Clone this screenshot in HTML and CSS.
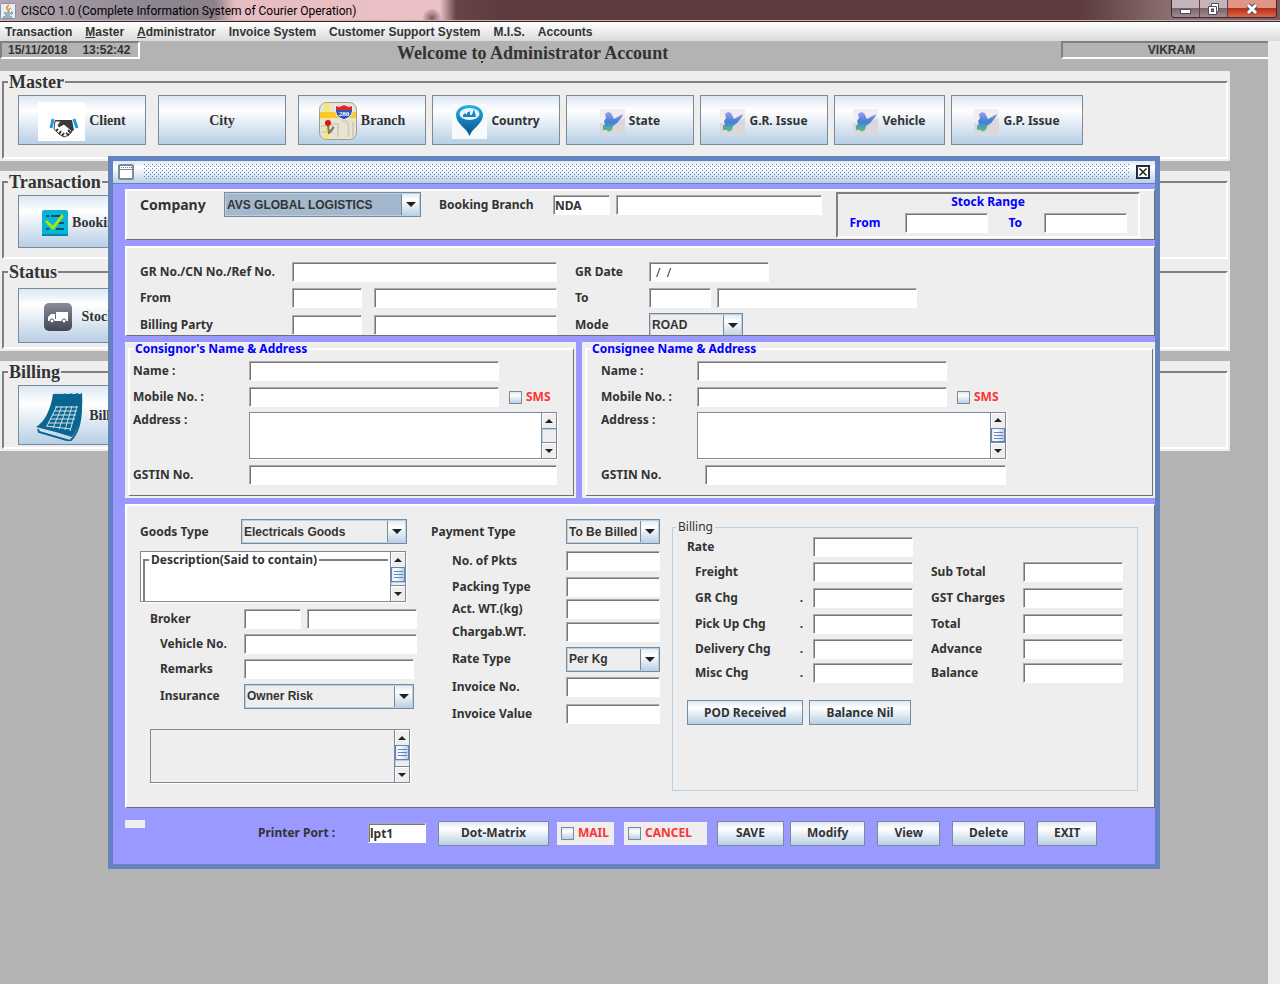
FILE: index.html
```html
<!DOCTYPE html>
<html lang="en">

<head>
    <meta charset="UTF-8">
    <meta name="viewport" content="width=device-width, initial-scale=1.0">
    <title>CISCO 1.0 (Complete Information System of Courier Operation)</title>
    <link rel="stylesheet" href="styles.css">
</head>

<body>

    <svg class="defs" aria-hidden="true">
        <defs>
            <linearGradient id="mapFill" x1="0" y1="0" x2="0" y2="1">
                <stop offset="0" stop-color="#a49bec" />
                <stop offset="0.5" stop-color="#3f7fd8" />
                <stop offset="1" stop-color="#5fc878" />
            </linearGradient>
            <linearGradient id="pinFill" x1="0" y1="0" x2="0" y2="1">
                <stop offset="0" stop-color="#27b1e6" />
                <stop offset="1" stop-color="#064f8c" />
            </linearGradient>
            <linearGradient id="truckFill" x1="0" y1="0" x2="0" y2="1">
                <stop offset="0" stop-color="#8a8b98" />
                <stop offset="1" stop-color="#454654" />
            </linearGradient>
        </defs>
        <symbol id="map" viewBox="0 0 25 25">
            <rect width="25" height="25" fill="#f1edf0" />
            <path d="M0 14 Q14 14 25 9 V25 H0Z" fill="#dcd8da" />
            <path d="M5 5 L8 3 L11 4 L14 10 L23 5 L22 8 L17 14 L13 17 L12 21 L8 23 L7 21 L3 21 L3 17 L5 15 L4 12 L6 9Z" fill="url(#mapFill)" />
        </symbol>
        <symbol id="up" viewBox="0 0 8 4">
            <path d="M4 0 L8 4 H0Z" fill="#222" />
        </symbol>
        <symbol id="down" viewBox="0 0 8 4">
            <path d="M0 0 H8 L4 4Z" fill="#222" />
        </symbol>
    </svg>

    <header class="titlebar">
        <svg class="java" viewBox="0 0 16 16" aria-hidden="true">
            <rect x="0.5" y="0.5" width="15" height="15" rx="1" fill="#e9eef3" stroke="#8196aa" />
            <path d="M9 2 Q5 5 8 7 Q9 8 8 9 M11 5 Q8 6 9 8" fill="none" stroke="#e8780f" stroke-width="1.3" />
            <path d="M4 10 H11 M5 12 H10 M11 9 Q14 9 11 12 M3 14 H12" fill="none" stroke="#47769c" />
        </svg>
        <span class="app-title">CISCO 1.0 (Complete Information System of Courier Operation)</span>
        <div class="win-controls">
            <button aria-label="Minimize"><svg width="13" height="12"><rect x="1.5" y="6.5" width="10" height="4" fill="#fff" stroke="#4b4f62" /></svg></button>
            <button aria-label="Restore"><svg width="13" height="14"><path d="M4.500 1.500 H11.500 V9.500 H9.500 V12.500 H1.500 V4.500 H4.500Z" fill="#fff" stroke="#4b4f62" /><path d="M4.500 4.500 H9.500 V9" fill="none" stroke="#4b4f62" /><rect x="4.500" y="7" width="2" height="2.500" fill="#8a7a80" stroke="#4b4f62" /></svg></button>
            <button class="win-close" aria-label="Close"><svg width="14" height="12"><path d="M3 2 L11 10 M11 2 L3 10" stroke="#4b4f62" stroke-width="5" /><path d="M3 2 L11 10 M11 2 L3 10" stroke="#fff" stroke-width="3" /></svg></button>
        </div>
    </header>

    <nav class="menubar">
        <a href="#">Transaction</a>
        <a href="#"><u>M</u>aster</a>
        <a href="#"><u>A</u>dministrator</a>
        <a href="#">Invoice System</a>
        <a href="#">Customer Support System</a>
        <a href="#">M.I.S.</a>
        <a href="#">Accounts</a>
    </nav>

    <main class="desktop">
        <div class="status">
            <div class="clock"><span>15/11/2018</span><span>13:52:42</span></div>
            <h1>Welcome to Administrator Account</h1>
            <span class="dot"></span>
            <div class="user">VIKRAM</div>
        </div>

        <section class="group">
            <fieldset class="tools">
                <legend>Master</legend>
                <button class="tool serif">
                    <svg width="47" height="39" viewBox="0 0 47 39">
                        <rect width="47" height="39" fill="#fff" />
                        <path d="M15 17 L13 26 M36 17 L39 26" stroke="#1e9ade" stroke-width="3" />
                        <path d="M17 18 H34 L36 28 L33 30 L25 23 L20 25 L22 20 L17 19Z" fill="#3c3c3c" />
                        <path d="M17 19 L16 27 L21 32 L26 35 L31 33 L34 29 L26 22 L21 25 L20 23 L23 19Z" fill="#fff" stroke="#3c3c3c" />
                        <path d="M18 29 L20 27 M21 32 L23 29 M24 34 L26 31 M28 31 L31 33 M30 28 L33 31" stroke="#3c3c3c" stroke-width="2" />
                    </svg>
                    Client
                </button>
                <button class="tool serif spaced">City</button>
                <button class="tool serif spaced">
                    <svg width="38" height="38" viewBox="0 0 38 38">
                        <rect x="0.500" y="0.500" width="37" height="37" rx="7" fill="#e9e4d2" stroke="#a39d8a" />
                        <path d="M8 1 V37" stroke="#f5e96c" stroke-width="5" />
                        <path d="M1 13 H37" stroke="#fbc92c" stroke-width="6" />
                        <path d="M13 31 V22 H19 V35 M23 19 Q32 17 29 35 M34 20 V35 M2 24 H7 M2 30 H7" fill="none" stroke="#d3cebd" stroke-width="2" />
                        <path d="M17 4 L20 5 L25 3 L30 5 L33 4 Q36 14 25 18 Q14 14 17 4Z" fill="#2a58b5" stroke="#fff" />
                        <path d="M17 4 L20 5 L25 3 L30 5 L33 4 V8 H17Z" fill="#dd2b28" />
                        <text x="25" y="14" fill="#fff" font-size="7" text-anchor="middle">280</text>
                        <path d="M9 23 L10 32 M10 31 L15 25" stroke="#777" stroke-width="2" />
                        <circle cx="9" cy="21" r="3" fill="#d8151a" />
                    </svg>
                    Branch
                </button>
                <button class="tool">
                    <svg width="35" height="35" viewBox="0 0 35 35">
                        <rect width="35" height="35" fill="#f7fafa" />
                        <path d="M17.500 32 C15 24 4 20 4 11 C4 5 10 1 17.500 1 C25 1 31 5 31 11 C31 20 20 24 17.500 32Z" fill="url(#pinFill)" />
                        <ellipse cx="17.500" cy="10" rx="10" ry="6" fill="#e8f5fb" />
                        <path d="M11 13 V11 L13 9 L15 11 V9 L18 7 V11 L20 11 L22 5 L24 13Z" fill="#1583bd" />
                    </svg>
                    Country
                </button>
                <button class="tool"><svg width="25" height="25"><use href="#map" /></svg>State</button>
                <button class="tool"><svg width="25" height="25"><use href="#map" /></svg>G.R. Issue</button>
                <button class="tool narrow"><svg width="25" height="25"><use href="#map" /></svg>Vehicle</button>
                <button class="tool wide"><svg width="25" height="25"><use href="#map" /></svg>G.P. Issue</button>
            </fieldset>
        </section>

        <section class="group">
            <fieldset class="tools transaction">
                <legend>Transaction</legend>
                <button class="tool serif">
                    <svg width="26" height="26" viewBox="0 0 26 26">
                        <rect width="26" height="26" rx="2" fill="#08b3d8" />
                        <rect y="24" width="26" height="2" fill="#0789aa" />
                        <path d="M4 6 H7 M9 6 H22 M4 13 H6 M14 13 H22 M4 19 H7 M14 19 H22" stroke="#0c5370" stroke-width="2" />
                        <path d="M4 11 L11 18 L21 5" fill="none" stroke="#a3e80d" stroke-width="3" />
                    </svg>
                    Booking
                </button>
            </fieldset>
            <fieldset class="tools stock">
                <legend>Status</legend>
                <button class="tool serif">
                    <svg width="34" height="28" viewBox="0 0 34 28">
                        <rect width="28" height="28" rx="5" fill="url(#truckFill)" />
                        <path d="M12 9 H24 V18 H4 V14 L7 11 H11 V16 H12Z" fill="#fff" />
                        <circle cx="8" cy="18" r="2" fill="#fff" stroke="#555663" />
                        <circle cx="20" cy="18" r="2" fill="#fff" stroke="#555663" />
                    </svg>
                    Stocks
                </button>
            </fieldset>
        </section>

        <section class="group">
            <fieldset class="tools bills">
                <legend>Billing</legend>
                <button class="tool serif">
                    <svg width="50" height="50" viewBox="0 0 50 50">
                        <path d="M1 36 Q14 28 18 3 L47 2 Q49 30 37 46 Q18 40 1 36Z" fill="#0a6691" />
                        <path d="M3 38 L4 41 L35 50 Q46 40 46 16" fill="none" stroke="#0a6691" stroke-width="2" />
                        <path d="M19 2 H46" stroke="#d5e5ef" stroke-width="2" stroke-dasharray="4 2" />
                        <path d="M20 16 H43 M19 20 H42 M17 24 H41 M15 28 H40 M13 32 H38 M11 35 L36 38 M22 15 L12 35 M27 15 L18 37 M32 15 L24 38 M37 15 L30 39 M42 15 L35 40" fill="none" stroke="#cfe0ec" />
                    </svg>
                    Billing
                </button>
            </fieldset>
        </section>

        <!-- booking entry window -->
        <form class="frame">
            <div class="frame-bar">
                <svg width="16" height="16" aria-hidden="true"><rect x="1" y="1" width="14" height="14" rx="1" fill="#fff" stroke="#7a8a99" stroke-width="2" /><path d="M3 3.500 H14" stroke="#6382bf" stroke-dasharray="1 1" /><path d="M2 5.500 H14" stroke="#7a8a99" /></svg>
                <span class="grip"></span>
                <button type="button" class="frame-close" aria-label="Close window"><svg width="14" height="14"><rect x="1" y="1" width="12" height="12" fill="#fff" stroke="#222c40" stroke-width="2" /><path d="M3.500 3.500 L10.500 10.500 M10.500 3.500 L3.500 10.500" stroke="#222" stroke-width="1.500" /></svg></button>
            </div>

            <div class="frame-body">
                <div class="panel company-panel">
                    <label class="big" for="company">Company</label>
                    <select id="company" class="focused">
                        <option>AVS GLOBAL LOGISTICS</option>
                    </select>
                    <label for="branch">Booking Branch</label>
                    <input type="text" id="branch" value="NDA">
                    <input type="text" id="branchName" aria-label="Branch name">
                    <div class="stock-range">
                        <h2>Stock Range</h2>
                        <label for="rangeFrom">From</label>
                        <input type="text" id="rangeFrom">
                        <label for="rangeTo">To</label>
                        <input type="text" id="rangeTo">
                    </div>
                </div>

                <div class="panel gr-panel">
                    <label for="grNo">GR No./CN No./Ref No.</label>
                    <input type="text" id="grNo" class="span-two">
                    <label for="grDate">GR Date</label>
                    <input type="text" id="grDate" class="date" value=" /  /">
                    <label for="fromCode">From</label>
                    <input type="text" id="fromCode">
                    <input type="text" aria-label="From name">
                    <label for="toCode">To</label>
                    <input type="text" id="toCode">
                    <input type="text" class="to-name" aria-label="To name">
                    <label for="party">Billing Party</label>
                    <input type="text" id="party">
                    <input type="text" aria-label="Billing party name">
                    <label for="mode">Mode</label>
                    <select id="mode" class="mode">
                        <option>ROAD</option>
                    </select>
                </div>

                <div class="parties">
                    <div class="party">
                        <fieldset class="raised">
                            <legend>Consignor's Name &amp; Address</legend>
                            <div class="party-fields">
                                <label for="crName">Name :</label>
                                <input type="text" id="crName">
                                <label for="crMobile">Mobile No. :</label>
                                <input type="text" id="crMobile">
                                <label class="check"><input type="checkbox">SMS</label>
                                <label for="crAddress" class="top">Address :</label>
                                <div class="textbox">
                                    <textarea id="crAddress"></textarea>
                                    <div class="scroll">
                                        <button type="button" aria-label="Up"><svg width="8" height="4"><use href="#up" /></svg></button>
                                        <i class="track"></i>
                                        <button type="button" aria-label="Down"><svg width="8" height="4"><use href="#down" /></svg></button>
                                    </div>
                                </div>
                                <label for="crGst">GSTIN No.</label>
                                <input type="text" id="crGst" class="gst">
                            </div>
                        </fieldset>
                    </div>
                    <div class="party">
                        <fieldset class="raised">
                            <legend>Consignee Name &amp; Address</legend>
                            <div class="party-fields consignee">
                                <label for="ceName">Name :</label>
                                <input type="text" id="ceName">
                                <label for="ceMobile">Mobile No. :</label>
                                <input type="text" id="ceMobile">
                                <label class="check"><input type="checkbox">SMS</label>
                                <label for="ceAddress" class="top">Address :</label>
                                <div class="textbox">
                                    <textarea id="ceAddress"></textarea>
                                    <div class="scroll">
                                        <button type="button" aria-label="Up"><svg width="8" height="4"><use href="#up" /></svg></button>
                                        <i class="thumb"></i>
                                        <i class="track"></i>
                                        <button type="button" aria-label="Down"><svg width="8" height="4"><use href="#down" /></svg></button>
                                    </div>
                                </div>
                                <label for="ceGst">GSTIN No.</label>
                                <input type="text" id="ceGst" class="gst">
                            </div>
                        </fieldset>
                    </div>
                </div>

                <div class="panel goods-panel">
                    <div class="goods">
                        <div class="goods-type">
                            <label for="goods">Goods Type</label>
                            <select id="goods">
                                <option>Electricals Goods</option>
                            </select>
                        </div>
                        <div class="textbox description">
                            <fieldset>
                                <legend><label for="desc">Description(Said to contain)</label></legend>
                                <textarea id="desc"></textarea>
                            </fieldset>
                            <div class="scroll">
                                <button type="button" aria-label="Up"><svg width="8" height="4"><use href="#up" /></svg></button>
                                <i class="thumb"></i>
                                <i class="track"></i>
                                <button type="button" aria-label="Down"><svg width="8" height="4"><use href="#down" /></svg></button>
                            </div>
                        </div>
                        <div class="goods-fields">
                            <label for="broker">Broker</label>
                            <div class="broker">
                                <input type="text" id="broker">
                                <input type="text" aria-label="Broker name">
                            </div>
                            <label for="vehicle" class="indent">Vehicle No.</label>
                            <input type="text" id="vehicle">
                            <label for="remarks" class="indent">Remarks</label>
                            <input type="text" id="remarks" class="short">
                            <label for="insurance" class="indent">Insurance</label>
                            <select id="insurance" class="short">
                                <option>Owner Risk</option>
                            </select>
                        </div>
                        <div class="textbox notes">
                            <textarea aria-label="Notes"></textarea>
                            <div class="scroll">
                                <button type="button" aria-label="Up"><svg width="8" height="4"><use href="#up" /></svg></button>
                                <i class="thumb"></i>
                                <i class="track"></i>
                                <button type="button" aria-label="Down"><svg width="8" height="4"><use href="#down" /></svg></button>
                            </div>
                        </div>
                    </div>

                    <div class="payment">
                        <label for="payType">Payment Type</label>
                        <select id="payType">
                            <option>To Be Billed</option>
                        </select>
                        <label for="pkts" class="indent">No. of Pkts</label>
                        <input type="text" id="pkts">
                        <label for="packing" class="indent">Packing Type</label>
                        <input type="text" id="packing">
                        <label for="actWt" class="indent">Act. WT.(kg)</label>
                        <input type="text" id="actWt">
                        <label for="chgWt" class="indent">Chargab.WT.</label>
                        <input type="text" id="chgWt">
                        <label for="rateType" class="indent">Rate Type</label>
                        <select id="rateType">
                            <option>Per Kg</option>
                        </select>
                        <label for="invNo" class="indent">Invoice No.</label>
                        <input type="text" id="invNo">
                        <label for="invValue" class="indent">Invoice Value</label>
                        <input type="text" id="invValue">
                    </div>

                    <fieldset class="billing">
                        <legend>Billing</legend>
                        <div class="charges">
                            <label for="rate" class="outdent">Rate</label>
                            <input type="text" id="rate">
                            <label for="freight">Freight</label>
                            <input type="text" id="freight">
                            <label for="subTotal">Sub Total</label>
                            <input type="text" id="subTotal">
                            <label for="grChg">GR Chg <span>.</span></label>
                            <input type="text" id="grChg">
                            <label for="gst">GST Charges</label>
                            <input type="text" id="gst">
                            <label for="pickUp">Pick Up Chg <span>.</span></label>
                            <input type="text" id="pickUp">
                            <label for="total">Total</label>
                            <input type="text" id="total">
                            <label for="delivery">Delivery Chg <span>.</span></label>
                            <input type="text" id="delivery">
                            <label for="advance">Advance</label>
                            <input type="text" id="advance">
                            <label for="misc">Misc Chg <span>.</span></label>
                            <input type="text" id="misc">
                            <label for="balance">Balance</label>
                            <input type="text" id="balance">
                        </div>
                        <div class="billing-actions">
                            <button type="button" class="btn">POD Received</button>
                            <button type="button" class="btn">Balance Nil</button>
                        </div>
                    </fieldset>
                </div>

                <div class="actions">
                    <span class="blank"></span>
                    <label for="port">Printer Port :</label>
                    <input type="text" id="port" value="lpt1">
                    <button type="button" class="btn printer">Dot-Matrix</button>
                    <label class="check boxed"><input type="checkbox">MAIL</label>
                    <label class="check boxed cancel"><input type="checkbox">CANCEL</label>
                    <button type="button" class="btn save">SAVE</button>
                    <button type="button" class="btn">Modify</button>
                    <button type="button" class="btn">View</button>
                    <button type="button" class="btn">Delete</button>
                    <button type="button" class="btn">EXIT</button>
                </div>
            </div>
        </form>
    </main>

</body>

</html>
```
FILE: styles.css
```css
* {
    box-sizing: border-box;
}

body {
    margin: 0;
    min-height: 100vh;
    display: flex;
    flex-direction: column;
    font-family: "Noto Sans", Tahoma, sans-serif;
    font-size: 12px;
    font-weight: bold;
    line-height: 16px;
    color: #333;
    background-color: #b3b3b3;
}

.defs {
    position: absolute;
    width: 0;
    height: 0;
}

fieldset {
    margin: 0;
    padding: 0;
    min-width: 0;
}

legend {
    padding: 0;
}

/* main window */
.titlebar {
    height: 22px;
    display: flex;
    align-items: center;
    border-bottom: 1px solid #3b2529;
    box-shadow: inset 0 -1px #c9b0b2;
    background:
        radial-gradient(circle at 432px 18px, #7d5a60 0, #7d5a6000 10px),
        linear-gradient(to right, #b5a7b1 0, #8b8490 160px, #8d8189 215px, #e6bcc2 235px, #ecc2c6 440px, #654546 456px, #5c3c3c 500px, #5c3c3c 1080px, #8f7477 1180px, #7a5a5c 100%);
}

.java {
    width: 16px;
    height: 16px;
    margin-right: 5px;
}

.app-title {
    font-family: Roboto, "Segoe UI", sans-serif;
    font-size: 12px;
    font-weight: normal;
    color: #000;
}

.win-controls {
    display: flex;
    align-self: flex-start;
    margin-left: auto;
    margin-right: 3px;
    border: 1px solid #3a2a2d;
    border-top: none;
    border-radius: 0 0 4px 4px;
    overflow: hidden;
}

.win-controls button {
    width: 28px;
    height: 17px;
    padding: 0;
    display: flex;
    align-items: center;
    justify-content: center;
    border: none;
    border-right: 1px solid #57444a;
    background: linear-gradient(#c5b4b7 0 45%, #7b6469 50%, #a08d91);
}

.win-controls .win-close {
    width: 48px;
    border-right: none;
    background: linear-gradient(#dd9585 0 45%, #bb2f15 50%, #d8684b);
}

.menubar {
    height: 19px;
    display: flex;
    align-items: center;
    gap: 13px;
    padding-left: 5px;
    font-family: "Liberation Sans", Arial, sans-serif;
    background: linear-gradient(#fff, #dadada);
}

.menubar a {
    color: #333;
    text-decoration: none;
}

.desktop {
    flex: 1;
    position: relative;
    border-right: 12px solid #eee;
}

.status {
    display: grid;
    grid-template-columns: 140px 1fr 207px;
    align-items: start;
    height: 30px;
    font-family: "Liberation Sans", Arial, sans-serif;
}

.clock,
.user {
    height: 18px;
    display: flex;
    align-items: center;
    border: 2px solid;
    border-color: #808080 #fff #fff #808080;
}

.clock {
    gap: 15px;
    padding-left: 6px;
}

.user {
    justify-content: center;
    padding-left: 12px;
    border-right: none;
}

.status h1 {
    margin: 0;
    padding-left: 257px;
    font-family: "Liberation Serif", "Times New Roman", serif;
    font-size: 18px;
    line-height: 24px;
}

.status .dot {
    position: absolute;
    top: 20px;
    left: 481px;
    width: 2px;
    height: 2px;
    background-color: #333;
}

.group {
    width: 97%;
    margin-bottom: 10px;
    padding: 1px 2px 2px;
    background-color: #eee;
}

.tools {
    display: flex;
    gap: 6px;
    padding: 3px 14px 12px;
    border: 2px solid;
    border-color: #808080 #fff #fff #808080;
}

.tools legend {
    margin-left: -10px;
    padding: 0 1px;
    font-family: "Liberation Serif", "Times New Roman", serif;
    font-size: 18px;
    line-height: 20px;
}

.transaction {
    padding-bottom: 9px;
    margin-bottom: 3px;
}

.stock {
    padding: 6px 14px 4px;
}

.bills {
    padding-bottom: 2px;
}

.tool,
.btn {
    font: inherit;
    color: #333;
    border: 1px solid #7a8a99;
    background: linear-gradient(#dde8f3, #fff 30%, #b8cfe5);
}

.tool {
    width: 128px;
    height: 50px;
    display: flex;
    align-items: center;
    justify-content: center;
    gap: 4px;
    padding: 2px 0 0;
}

.tool.serif {
    font-family: "Liberation Serif", "Times New Roman", serif;
    font-size: 14px;
}

.tool.spaced {
    margin-left: 6px;
}

.tool.narrow {
    width: 111px;
}

.tool.wide {
    width: 132px;
}

.transaction .tool {
    height: 53px;
}

.stock .tool {
    height: 55px;
}

.bills .tool {
    height: 60px;
}

/* internal frame */
.frame {
    position: absolute;
    top: 115px;
    left: 108px;
    right: 108px;
    border: 5px solid #6382bf;
    background-color: #99f;
}

.frame-bar {
    height: 23px;
    display: flex;
    align-items: center;
    gap: 10px;
    padding: 0 5px;
    border-bottom: 1px solid #6382bf;
    background: linear-gradient(#dde8f3, #fff 30%, #b8cfe5);
}

.grip {
    flex: 1;
    height: 16px;
    background: url("data:image/svg+xml,%3Csvg xmlns='http://www.w3.org/2000/svg' width='4' height='4'%3E%3Cpath d='M0 0h1v1H0zM2 2h1v1H2z' fill='%236382bf'/%3E%3C/svg%3E");
}

.frame-bar .frame-close {
    display: flex;
    margin-left: -4px;
    padding: 0;
    border: none;
    background: none;
}

.frame-body {
    display: flex;
    flex-direction: column;
    gap: 6px;
    padding: 5px 0 0 12px;
}

.panel {
    border: 2px solid;
    border-width: 2px 1px 1px 2px;
    border-color: #fff #707070 #707070 #fff;
    background-color: #eee;
}

input[type="text"] {
    width: 100%;
    height: 20px;
    min-width: 0;
    margin: 0;
    padding: 0 1px;
    font: inherit;
    color: #333;
    border: 1px solid;
    border-color: #aaa #fff #fff #aaa;
    border-radius: 0;
    background-color: #fff;
    box-shadow: inset 1px 1px #777;
    outline: none;
}

select {
    appearance: none;
    width: 100%;
    height: 25px;
    padding: 0 0 0 2px;
    font-family: "Liberation Sans", Arial, sans-serif;
    font-size: 12px;
    font-weight: bold;
    color: #333;
    border: 1px solid #7a8a99;
    border-radius: 0;
    box-shadow: inset 0 0 0 1px #b8cfe5;
    background:
        url("data:image/svg+xml,%3Csvg xmlns='http://www.w3.org/2000/svg' width='10' height='5'%3E%3Cpath d='M0 0h10L5 5z' fill='%23222'/%3E%3C/svg%3E") right 4px center no-repeat,
        linear-gradient(#7a8a99, #7a8a99) right 18px top / 1px 100% no-repeat,
        linear-gradient(#dde8f3, #fff 30%, #b8cfe5) right / 18px 100% no-repeat,
        #eee;
}

select.focused {
    background-color: #a3b8cc;
}

.company-panel {
    display: grid;
    grid-template-columns: 78px 209px 108px 57px 206px 312px;
    column-gap: 6px;
    align-items: start;
    height: 51px;
    padding: 1px 0 0 13px;
}

.company-panel > label {
    line-height: 25px;
}

.company-panel .big {
    font-size: 14px;
}

.company-panel > select {
    width: 197px;
}

.company-panel > input[type="text"] {
    margin-top: 3px;
}

.stock-range {
    display: grid;
    grid-template-columns: 55px 83px 56px 83px;
    grid-template-rows: 16px 26px;
    justify-content: center;
    align-items: center;
    height: 46px;
    margin-left: 8px;
    color: #00f;
    border: 2px solid;
    border-color: #808080 #fff #fff #808080;
}

.stock-range h2 {
    grid-column: 1 / -1;
    margin: 0;
    font-size: 12px;
    line-height: 16px;
    text-align: center;
}

.stock-range label + input + label {
    padding-left: 21px;
}

.gr-panel {
    display: grid;
    grid-template-columns: 152px 70px 195px 92px 62px 206px;
    grid-template-rows: 26px 26px 28px;
    align-items: center;
    height: 90px;
    padding: 11px 0 0 13px;
    overflow: hidden;
}

.gr-panel .span-two {
    grid-column: 2 / 4;
}

.gr-panel input + input {
    width: auto;
    margin-left: 12px;
}

.gr-panel input ~ label:nth-of-type(even) {
    padding-left: 18px;
}

.gr-panel .date {
    grid-column: 5 / 7;
    width: 120px;
    padding-left: 3px;
    font-weight: normal;
    white-space: pre;
}

.gr-panel input + .to-name {
    margin-left: 6px;
}

.gr-panel .mode {
    grid-column: 5 / 7;
    width: 94px;
}

.parties {
    display: grid;
    grid-template-columns: 451px 1fr;
    gap: 6px;
}

.party {
    height: 156px;
    padding: 0 2px 2px 3px;
    background-color: #eee;
}

.raised {
    border: 2px solid;
    border-width: 2px 1px 1px 2px;
    border-color: #fff #707070 #707070 #fff;
}

.raised legend {
    margin-left: 3px;
    padding: 0 2px;
    line-height: 14px;
    color: #00f;
}

.party-fields {
    display: grid;
    grid-template-columns: 116px 250px 58px;
    grid-template-rows: 26px 26px 52px 26px;
    align-items: center;
    padding: 2px 0 7px 3px;
}

.party-fields > label:not(.check) {
    grid-column: 1;
}

.party-fields .top {
    align-self: start;
    padding-top: 2px;
}

.party-fields .textbox {
    grid-column: 2 / 4;
    align-self: start;
    height: 47px;
    margin-top: 2px;
}

.party-fields .gst {
    grid-column: 2 / 4;
}

.consignee {
    grid-template-columns: 96px 250px 59px;
    padding-left: 14px;
}

.consignee .gst {
    width: auto;
    margin-left: 8px;
}

.check {
    display: flex;
    align-items: center;
    gap: 4px;
    color: #f33;
}

.party-fields .check {
    padding-left: 10px;
}

.check input {
    appearance: none;
    width: 13px;
    height: 13px;
    margin: 0;
    flex: none;
    border: 1px solid #7a8a99;
    background: linear-gradient(#dde8f3, #fff 30%, #b8cfe5);
}

.textbox {
    display: flex;
    border: 1px solid #7a8a99;
    box-shadow: 1px 1px #fff;
    background-color: #fff;
}

.textbox textarea {
    flex: 1;
    min-width: 0;
    margin: 0;
    padding: 2px;
    font: inherit;
    border: none;
    background: none;
    resize: none;
    outline: none;
    overflow: hidden;
}

.scroll {
    width: 15px;
    display: flex;
    flex-direction: column;
    border-left: 1px solid #7a8a99;
    background-color: #eee;
}

.scroll button {
    height: 15px;
    padding: 0;
    display: flex;
    align-items: center;
    justify-content: center;
    border: none;
    background-color: #eee;
    box-shadow: inset 1px 1px #fff;
}

.track {
    flex: 1;
    border: 1px solid #7a8a99;
    border-width: 1px 0;
    box-shadow: inset 1px 1px #b8cfe5;
}

.thumb {
    height: 15px;
    border: 1px solid #6382bf;
    background:
        repeating-linear-gradient(#6382bf 0 1px, transparent 1px 3px) center / 9px 7px no-repeat,
        linear-gradient(to right, #dde8f3, #fff 30%, #b8cfe5);
}

.thumb + .track {
    border-top: none;
}

.goods-panel {
    display: grid;
    grid-template-columns: 291px 241px 466px;
    align-items: start;
    height: 304px;
    padding: 13px 0 0 13px;
}

.goods-type {
    display: grid;
    grid-template-columns: 101px 166px;
    align-items: center;
}

.description {
    width: 266px;
    height: 51px;
    margin-top: 7px;
}

.description fieldset {
    flex: 1;
    display: flex;
    height: 49px;
    margin: 0 2px;
    border: 2px solid #808080;
    border-width: 2px 0 0 2px;
}

.description legend {
    margin-left: 4px;
    padding: 0 2px;
    line-height: 16px;
}

.goods-fields {
    display: grid;
    grid-template-columns: 94px 173px;
    grid-template-rows: 25px 25px 25px 30px;
    align-items: center;
    padding: 4px 0 0 10px;
}

.broker {
    display: grid;
    grid-template-columns: 57px 110px;
    gap: 6px;
}

.goods-fields .indent {
    padding-left: 10px;
}

.goods-fields .short {
    width: 170px;
}

.notes {
    width: 260px;
    height: 54px;
    margin: 18px 0 0 10px;
    background-color: #eee;
}

.payment {
    display: grid;
    grid-template-columns: 135px 94px;
    grid-template-rows: 29px 26px 25px 20px 26px 28px 28px 26px;
    align-items: center;
}

.payment > label[for="payType"],
.payment > #payType {
    align-self: start;
    line-height: 25px;
}

.payment .indent {
    padding-left: 21px;
}

.billing {
    height: 272px;
    border: 1px solid #b8cfe5;
}

.billing legend {
    margin-left: 3px;
    padding: 0 2px;
    font-weight: normal;
    line-height: 16px;
}

.charges {
    display: grid;
    grid-template-columns: 118px 100px 110px 100px;
    grid-template-rows: 24px 26px 26px 25px 25px 24px;
    align-items: center;
    padding-left: 22px;
}

.charges label:nth-of-type(odd) {
    padding-left: 18px;
}

.charges label:nth-of-type(even) {
    display: flex;
    justify-content: space-between;
    padding-right: 10px;
}

.charges .outdent {
    margin-left: -26px;
}

.charges .outdent + input + label {
    grid-column: 1;
}

.billing-actions {
    display: flex;
    gap: 6px;
    padding: 15px 0 0 14px;
}

.btn {
    height: 25px;
    padding: 0 16px;
}

.actions {
    display: flex;
    align-items: center;
    height: 50px;
    padding-bottom: 12px;
}

.actions .blank {
    width: 20px;
    height: 8px;
    margin: 0 113px 18px 0;
    background-color: #eee;
}

.actions > label[for="port"] {
    width: 110px;
}

.actions #port {
    width: 58px;
    margin-right: 12px;
}

.actions .btn {
    margin-right: 12px;
    padding: 0 16px;
}

.actions .printer {
    margin-right: 8px;
    padding: 0 22px;
}

.boxed {
    width: 57px;
    height: 23px;
    padding-left: 4px;
    background-color: #eee;
}

.boxed.cancel {
    width: 83px;
    margin: 0 10px;
}

.actions .save {
    margin-right: 6px;
    padding: 0 18px;
}
```
